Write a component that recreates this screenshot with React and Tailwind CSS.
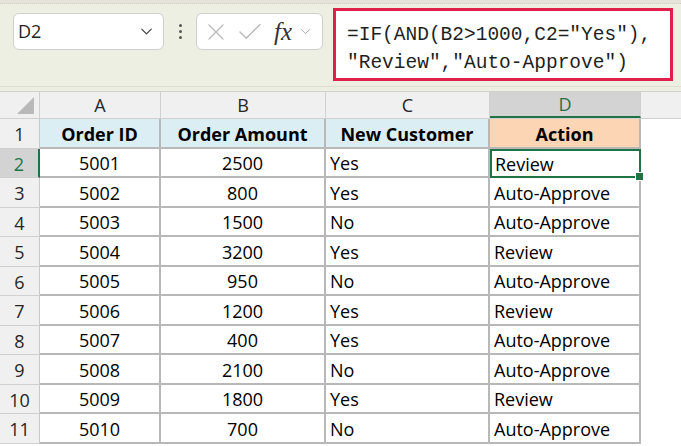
import { ChevronDown, X, Check } from 'lucide-react';

const rows = [
  ['5001', '2500', 'Yes', 'Review'],
  ['5002', '800', 'Yes', 'Auto-Approve'],
  ['5003', '1500', 'No', 'Auto-Approve'],
  ['5004', '3200', 'Yes', 'Review'],
  ['5005', '950', 'No', 'Auto-Approve'],
  ['5006', '1200', 'Yes', 'Review'],
  ['5007', '400', 'Yes', 'Auto-Approve'],
  ['5008', '2100', 'No', 'Auto-Approve'],
  ['5009', '1800', 'Yes', 'Review'],
  ['5010', '700', 'No', 'Auto-Approve'],
];

const cellFont = { fontFamily: '"Open Sans", Lato, sans-serif' };

const FormulaBar = () => (
  <div className="h-[91px] bg-[#eeefe3] relative shrink-0">
    <div className="h-[4px] bg-[#e4e4da] border-b border-dotted border-[#cfcfc4]" />
    <div className="flex items-start pl-[13px] pt-[9px]">
      <div className="w-[151px] h-[37px] bg-white border border-[#cfcfcf] rounded-[6px] flex items-center justify-between pl-[4px] pr-[7px]">
        <span className="text-[18px] text-[#1f1f1f]" style={{ fontFamily: '"Open Sans", sans-serif' }}>D2</span>
        <ChevronDown size={19} strokeWidth={1.6} className="text-[#444]" />
      </div>
      <div className="w-[32px] h-[37px] flex flex-col items-center justify-center gap-[3px]">
        <span className="w-[3px] h-[3px] rounded-full bg-[#555]" />
        <span className="w-[3px] h-[3px] rounded-full bg-[#555]" />
        <span className="w-[3px] h-[3px] rounded-full bg-[#555]" />
      </div>
      <div className="w-[127px] h-[37px] bg-white border border-[#cfcfcf] rounded-[6px] flex items-center pl-[5px] pr-[4px]">
        <X size={28} strokeWidth={1.1} className="text-[#b8b8b8]" />
        <Check size={30} strokeWidth={1.1} className="text-[#b8b8b8] ml-[5px]" />
        <span className="ml-[9px] text-[25px] italic text-[#333] leading-none" style={{ fontFamily: '"Liberation Serif", serif' }}>fx</span>
        <ChevronDown size={17} strokeWidth={1.4} className="text-[#b0b0b0] ml-[5px]" />
      </div>
      <div className="ml-[10px] mt-[-5px] w-[340px] h-[73px] bg-white border-[3px] border-[#e0204a] pl-[11px] pt-[10px]">
        <div className="text-[19.5px] leading-[28px] text-[#1f1f1f] whitespace-pre" style={{ fontFamily: '"Liberation Mono", monospace' }}>
          {'=IF(AND(B2>1000,C2="Yes"),\n"Review","Auto-Approve")'}
        </div>
      </div>
    </div>
    <div className="absolute bottom-[4px] left-0 right-0 h-px bg-[#dedfd2]" />
  </div>
);

const ColHeader = () => (
  <div className="flex h-[28px] bg-[#f0f0f0] border-t border-b border-[#d0d0d0] text-[18px] text-[#262626]" style={cellFont}>
    <div className="w-[40px] border-r border-[#d0d0d0] relative">
      <div className="absolute right-[5px] bottom-[4px] w-0 h-0 border-l-[17px] border-l-transparent border-b-[17px] border-b-[#b9b9b9]" />
    </div>
    <div className="w-[121px] flex items-center justify-center border-r border-[#d0d0d0]">A</div>
    <div className="w-[165px] flex items-center justify-center border-r border-[#d0d0d0]">B</div>
    <div className="w-[164px] flex items-center justify-center border-r border-[#d0d0d0]">C</div>
    <div className="w-[151px] flex items-center justify-center bg-[#d3d3d3] text-[#217346] border-r border-[#d0d0d0] border-b-2 border-b-[#217346]">D</div>
    <div className="flex-1" />
  </div>
);

const RowNum = ({ n, active }) => (
  <div
    className={
      active
        ? 'w-[40px] flex items-center justify-center pt-[3px] bg-[#d3d3d3] text-[#217346] border-r-2 border-[#217346] border-b border-b-[#d0d0d0]'
        : 'w-[40px] flex items-center justify-center pt-[3px] bg-[#f0f0f0] text-[#262626] border-r border-[#c8c8c8] border-b border-b-[#d0d0d0]'
    }
  >
    {n}
  </div>
);

export default function App() {
  return (
    <div className="w-[681px] h-[446px] overflow-hidden bg-white flex flex-col">
      <FormulaBar />
      <ColHeader />
      <div className="text-[18px] text-black" style={cellFont}>
        <div className="flex h-[29.5px]">
          <RowNum n={1} />
          <div className="w-[121px] flex items-center justify-center pt-[3px] font-bold bg-[#dbeef4] border-r-2 border-b-2 border-[#b8b8b8]">Order ID</div>
          <div className="w-[165px] flex items-center justify-center pt-[3px] font-bold bg-[#dbeef4] border-r-2 border-b-2 border-[#b8b8b8]">Order Amount</div>
          <div className="w-[164px] flex items-center justify-center pt-[3px] font-bold bg-[#dbeef4] border-r-2 border-b-2 border-[#b8b8b8]">New Customer</div>
          <div className="w-[151px] flex items-center justify-center pt-[3px] font-bold bg-[#fcd5b4] border-r-2 border-b-2 border-[#b8b8b8]">Action</div>
        </div>
        {rows.map((r, i) => (
          <div key={i} className="flex h-[29.5px]">
            <RowNum n={i + 2} active={i === 0} />
            <div className="w-[121px] flex items-center justify-center pt-[3px] border-r-2 border-b-2 border-[#b8b8b8]">{r[0]}</div>
            <div className="w-[165px] flex items-center justify-center pt-[3px] border-r-2 border-b-2 border-[#b8b8b8]">{r[1]}</div>
            <div className="w-[164px] flex items-center pl-[4px] pt-[3px] border-r-2 border-b-2 border-[#b8b8b8]">{r[2]}</div>
            {i === 0 ? (
              <div className="w-[151px] flex items-center pl-[3px] pt-[3px] border-2 border-[#217346] relative z-10">
                {r[3]}
                <span className="absolute right-[-5px] bottom-[-5px] w-[9px] h-[9px] bg-[#217346] border border-white" />
              </div>
            ) : (
              <div className="w-[151px] flex items-center pl-[4px] pt-[3px] border-r-2 border-b-2 border-[#b8b8b8]">{r[3]}</div>
            )}
          </div>
        ))}
      </div>
    </div>
  );
}
